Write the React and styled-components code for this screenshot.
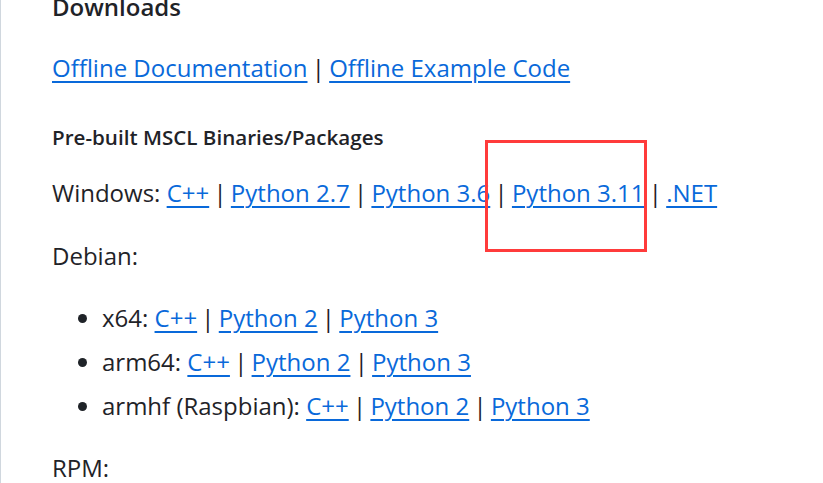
import React from "react";
import styled, { createGlobalStyle } from "styled-components";

const Global = createGlobalStyle`
  html, body { margin: 0; padding: 0; background: #fff; overflow: hidden; }
  body { font-family: "Open Sans", "Noto Sans", sans-serif; color: #1f2328; }
`;

const Page = styled.div`
  position: relative;
  width: 823px;
  height: 483px;
  overflow: hidden;
  border-left: 1px solid #d0d7de;
  box-sizing: border-box;
`;

const Content = styled.div`
  margin-top: -15px;
  padding-left: 51px;
  font-size: 24px;
  line-height: 44px;
`;

const Heading = styled.div`
  font-weight: 600;
  font-size: ${(p) => p.$size || 24}px;
  line-height: 44px;
  margin: ${(p) => p.$margin || "0"};
`;

const Para = styled.div`
  margin: ${(p) => p.$margin || "0"};
  white-space: nowrap;
`;

const Link = styled.a`
  color: #0969da;
  text-decoration: underline;
  text-decoration-thickness: 2px;
  text-underline-offset: 4px;
  cursor: pointer;
`;

const Sep = styled.span`
  color: #1f2328;
  word-spacing: -2px;
`;

const List = styled.ul`
  margin: 18px 0 0;
  padding-left: 50px;
  list-style: disc;
`;

const Item = styled.li`
  white-space: nowrap;
`;

const Highlight = styled.div`
  position: absolute;
  left: 484px;
  top: 140px;
  width: 162px;
  height: 112px;
  border: 3px solid #ff3b3b;
  box-sizing: border-box;
  pointer-events: none;
`;

function Links({ items }) {
  return items.map((t, i) => (
    <React.Fragment key={i}>
      {i > 0 && <Sep> | </Sep>}
      <Link>{t}</Link>
    </React.Fragment>
  ));
}

export default function App() {
  return (
    <Page>
      <Global />
      <Content>
        <Heading>Downloads</Heading>
        <Para $margin="17px 0 0">
          <Links items={["Offline Documentation", "Offline Example Code"]} />
        </Para>
        <Heading $size={20.6} $margin="25px 0 0">Pre-built MSCL Binaries/Packages</Heading>
        <Para $margin="12px 0 0">
          Windows: <Links items={["C++", "Python 2.7", "Python 3.6", "Python 3.11", ".NET"]} />
        </Para>
        <Para $margin="19px 0 0">Debian:</Para>
        <List>
          <Item>x64: <Links items={["C++", "Python 2", "Python 3"]} /></Item>
          <Item>arm64: <Links items={["C++", "Python 2", "Python 3"]} /></Item>
          <Item>armhf (Raspbian): <Links items={["C++", "Python 2", "Python 3"]} /></Item>
        </List>
        <Para $margin="18px 0 0">RPM:</Para>
      </Content>
      <Highlight />
    </Page>
  );
}
